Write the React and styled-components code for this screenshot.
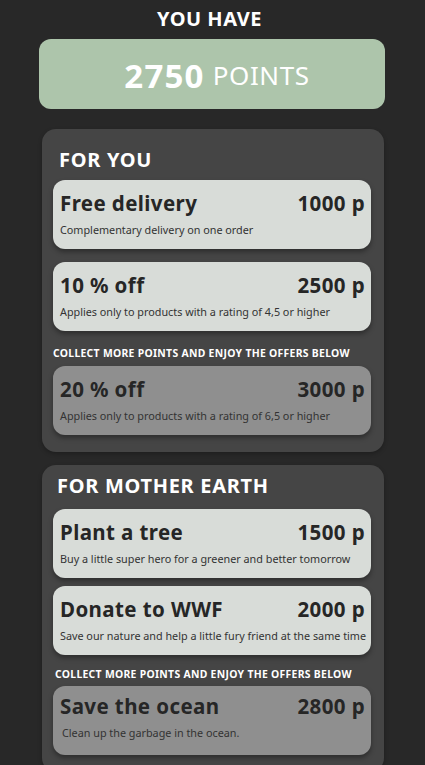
import React from "react";
import styled, { createGlobalStyle } from "styled-components";

const Global = createGlobalStyle`
  html, body { margin: 0; padding: 0; background: #282828; }
  body { font-family: "Noto Sans", "DejaVu Sans", sans-serif; }
`;

const Page = styled.div`
  width: 425px;
  min-height: 765px;
  background: #282828;
  display: flex;
  flex-direction: column;
  align-items: center;
  padding: 7px 0 20px;
  box-sizing: border-box;
`;

const Title = styled.h1`
  margin: 0 6px 0 0;
  color: #fff;
  font-size: 20px;
  font-weight: 700;
  line-height: 24px;
  letter-spacing: 0.5px;
`;

const PointsBox = styled.div`
  margin: 8px 1px 0 0;
  width: 346px;
  height: 70px;
  border-radius: 12px;
  background: #adc5ab;
  display: flex;
  align-items: center;
  justify-content: center;
  gap: 8px;
  color: #fff;
  box-sizing: border-box;
  padding: 2px 0 0 10px;
`;

const PointsNum = styled.span`
  font-size: 33px;
  font-weight: 700;
  letter-spacing: 1.2px;
`;

const PointsLabel = styled.span`
  font-size: 26px;
  font-weight: 400;
  letter-spacing: 0.6px;
`;

const Panel = styled.section`
  margin-top: ${(p) => p.$mt}px;
  width: 342px;
  margin-left: 1px;
  background: #454545;
  border-radius: 14px;
  padding: ${(p) => p.$pt}px 13px 17px 11px;
  box-sizing: border-box;
  display: flex;
  flex-direction: column;
  box-shadow: 0 2px 4px rgba(0, 0, 0, 0.25);
`;

const PanelTitle = styled.h2`
  margin: 0 0 ${(p) => p.$mb}px ${(p) => p.$ml}px;
  color: #fff;
  font-size: 20px;
  font-weight: 700;
  line-height: 24px;
  letter-spacing: 0.7px;
`;

const CardList = styled.div`
  display: flex;
  flex-direction: column;
  gap: ${(p) => p.$gap}px;
`;

const Card = styled.div`
  height: 69px;
  border-radius: 12px;
  background: ${(p) => (p.$locked ? "#8f8f8f" : "#d8dcd8")};
  box-shadow: 0 3px 5px rgba(0, 0, 0, 0.35);
  padding: ${(p) => (p.$tight ? 6 : 9)}px 6px 0 7px;
  box-sizing: border-box;
  display: flex;
  flex-direction: column;
  color: #262626;
`;

const CardTop = styled.div`
  display: flex;
  justify-content: space-between;
  align-items: baseline;
`;

const CardName = styled.span`
  font-size: 20.5px;
  font-weight: 700;
  line-height: 28px;
  letter-spacing: 0.4px;
`;

const CardPrice = styled.span`
  font-size: 20.5px;
  font-weight: 700;
  line-height: 28px;
  letter-spacing: 0.4px;
`;

const CardDesc = styled.span`
  margin-top: 6px;
  font-size: 10.8px;
  line-height: 14px;
  color: #333;
  white-space: nowrap;
  padding-left: ${(p) => p.$indent || 0}px;
`;

const Notice = styled.div`
  color: #fff;
  font-size: 10.4px;
  font-weight: 700;
  line-height: 12px;
  margin: ${(p) => p.$mt}px 0 ${(p) => p.$mb}px ${(p) => p.$ml || 0}px;
  letter-spacing: 0.3px;
  white-space: nowrap;
`;

function Offer({ name, price, desc, locked, indent, tight }) {
  return (
    <Card $locked={locked} $tight={tight}>
      <CardTop>
        <CardName>{name}</CardName>
        <CardPrice>{price}</CardPrice>
      </CardTop>
      <CardDesc $indent={indent}>{desc}</CardDesc>
    </Card>
  );
}

export default function App() {
  return (
    <>
      <Global />
      <Page>
        <Title>YOU HAVE</Title>
        <PointsBox>
          <PointsNum>2750</PointsNum>
          <PointsLabel>POINTS</PointsLabel>
        </PointsBox>

        <Panel $mt={20} $pt={19}>
          <PanelTitle $mb={8} $ml={6}>FOR YOU</PanelTitle>
          <CardList $gap={13}>
            <Offer name="Free delivery" price="1000 p" desc="Complementary delivery on one order" />
            <Offer name="10 % off" price="2500 p" desc="Applies only to products with a rating of 4,5 or higher" />
          </CardList>
          <Notice $mt={16} $mb={7}>COLLECT MORE POINTS AND ENJOY THE OFFERS BELOW</Notice>
          <CardList $gap={13}>
            <Offer locked name="20 % off" price="3000 p" desc="Applies only to products with a rating of 6,5 or higher" />
          </CardList>
        </Panel>

        <Panel $mt={13} $pt={9}>
          <PanelTitle $mb={11} $ml={4}>FOR MOTHER EARTH</PanelTitle>
          <CardList $gap={8}>
            <Offer name="Plant a tree" price="1500 p" desc="Buy a little super hero for a greener and better tomorrow" />
            <Offer name="Donate to WWF" price="2000 p" desc="Save our nature and help a little fury friend at the same time" />
          </CardList>
          <Notice $mt={13} $mb={6} $ml={2}>COLLECT MORE POINTS AND ENJOY THE OFFERS BELOW</Notice>
          <CardList $gap={8}>
            <Offer locked tight indent={2} name="Save the ocean" price="2800 p" desc="Clean up the garbage in the ocean." />
          </CardList>
        </Panel>
      </Page>
    </>
  );
}
